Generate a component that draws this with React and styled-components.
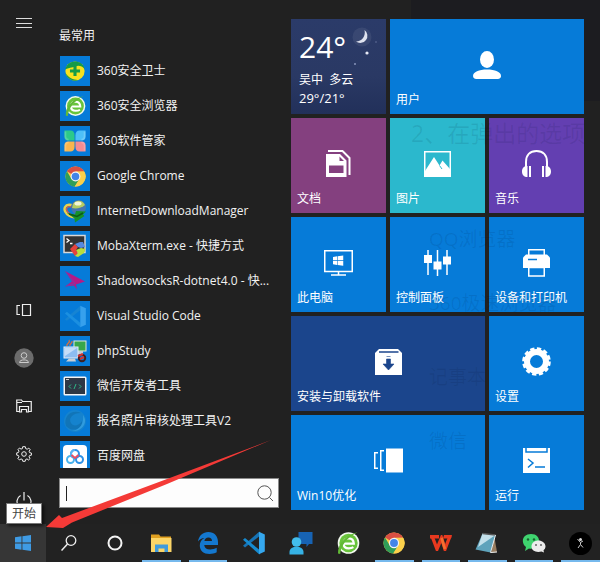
import React from 'react'
import styled, { createGlobalStyle } from 'styled-components'

const GlobalStyle = createGlobalStyle`
* {
    box-sizing: border-box;
}
body {
    margin: 0;
    background: #212121;
    font-family: 'Open Sans', 'Noto Sans CJK SC', sans-serif;
    font-size: 12px;
    color: #f2f2f2;
}
button, input {
    font: inherit;
    color: inherit;
    border: 0;
    padding: 0;
    background: none;
}
svg {
    display: block;
    flex: none;
}
`

const Desktop = styled.div`
    position: relative;
    display: flex;
    flex-direction: column;
    height: 100vh;
    overflow: hidden;
`
const StartMenu = styled.main`
    position: relative;
    flex: 1;
    min-height: 0;
    display: grid;
    grid-template-columns: 47px 244px 1fr;
`
const Rail = styled.nav`
    display: flex;
    flex-direction: column;
    gap: 8px;
    padding: 3px 0 2px;
`
const RailButton = styled.button`
    height: 40px;
    display: flex;
    align-items: center;
    justify-content: center;

    &:first-child {
        margin-bottom: auto;
    }
`
const AppColumn = styled.section`
    display: flex;
    flex-direction: column;
    min-height: 0;
    padding: 27px 12px 16px;
`
const Heading = styled.h2`
    margin: 0 0 11px;
    font-size: 12px;
    font-weight: 400;
    line-height: 18px;
`
const AppList = styled.ul`
    flex: 1;
    min-height: 0;
    overflow: hidden;
    margin: 0;
    padding: 0 0 0 1px;
    list-style: none;
`
const AppButton = styled.button`
    display: flex;
    align-items: center;
    gap: 7px;
    width: 100%;
    margin-bottom: 5px;
    line-height: 30px;
    white-space: nowrap;
`
const AppIcon = styled.span`
    flex: none;
    width: 30px;
    height: 30px;
    display: flex;
    align-items: center;
    justify-content: center;
    background: #067bd8;
`
const SearchBox = styled.form`
    display: flex;
    align-items: center;
    height: 30px;
    margin-top: 10px;
    padding: 0 4px 0 6px;
    border: 1px solid #8a8a8a;
    background: #fdfdfd;
    color: #222;
`
const Caret = styled.span`
    width: 1px;
    height: 15px;
    background: #222;
`
const SearchInput = styled.input`
    flex: 1;
    min-width: 0;
    outline: 0;
`
const Tiles = styled.section`
    display: grid;
    grid-template-columns: repeat(3, 95px);
    grid-auto-rows: 95px;
    gap: 4px;
    align-content: start;
    padding-top: 19px;
`
const TileButton = styled.button`
    grid-column: span ${props => props.$span || 1};
    display: grid;
    padding: 0 6px 4px;
    background: ${props => props.$color || '#067bd8'};
    color: #fff;
    text-align: left;

    > svg {
        grid-area: 1 / 1;
        place-self: center;
    }
`
const TileLabel = styled.span`
    grid-area: 1 / 1;
    align-self: end;
    line-height: 20px;
`
const Weather = styled(TileButton)`
    background: linear-gradient(#2b3b69, #2a3964 60%, #22305a);
    padding: 8px;
    align-content: start;

    > svg {
        place-self: start end;
    }
`
const Degrees = styled.span`
    grid-area: 1 / 1;
    font-size: 30px;
    line-height: 40px;
`
const Place = styled.span`
    padding-top: 4px;
    line-height: 18px;
`
const Range = styled.span`
    font-size: 13px;
    line-height: 18px;
`

/* the page behind the menu shows through the acrylic */
const BackdropPanel = styled.div`
    position: absolute;
    inset: 0 0 auto 411px;
    height: 101px;
    background: #1c1c20;
`
const Backdrop = styled.div`
    position: absolute;
    inset: 0 0 38px 411px;
    padding-top: 118px;
    pointer-events: none;
    overflow: hidden;
    color: rgba(0, 10, 40, 0.09);
    font-size: 19px;
    white-space: nowrap;
`
const BackdropTitle = styled.p`
    margin: 0;
    font-size: 23px;
    line-height: 30px;
`
const BackdropLine = styled.p`
    margin: ${props => props.$gap}px 0 0 18px;
    line-height: 30px;
`
const Taskbar = styled.footer`
    position: relative;
    display: flex;
    height: 38px;
    background: #222;
`
const SystemButtons = styled.div`
    display: grid;
    grid-template-columns: repeat(3, 46px);
    width: 141px;
`
const Running = styled.div`
    display: grid;
    grid-template-columns: repeat(10, 1fr);
    flex: none;
    width: 466px;
`
const TaskButton = styled.button`
    position: relative;
    display: flex;
    align-items: center;
    justify-content: center;
    background: ${props => props.$active ? '#363636' : 'none'};

    &::after {
        content: '';
        position: absolute;
        inset: auto 4px 0;
        height: 2px;
        background: ${props => props.$open ? '#76b9ed' : 'none'};
    }
`
const Tooltip = styled.span`
    position: absolute;
    left: 6px;
    bottom: 100%;
    padding: 0 5px;
    border: 1px solid #767676;
    background: #fff;
    color: #444;
    line-height: 19px;
    white-space: nowrap;
    box-shadow: 2px 2px 3px rgba(0, 0, 0, 0.6);
`
const Pointer = styled.svg`
    position: absolute;
    left: 44px;
    bottom: 32px;
    pointer-events: none;
`

const Icon = ({ w = 24, h = w, box, children }) => (
    <svg width={w} height={h} viewBox={box || `0 0 ${w} ${h}`} fill="none" aria-hidden="true">{children}</svg>
)

/* colour icons, drawn on a 24 unit box */
const Chrome = ({ size }) => (
    <Icon w={size} box="0 0 24 24">
        <circle cx="12" cy="12" r="11.5" fill="#fbd04b" />
        <path d="M12 12 2.2 6A11.5 11.5 0 0 1 22 6.2L12 6.5Z" fill="#d94f43" />
        <path d="M2.2 6A11.5 11.5 0 0 0 11.2 23.5L16.6 14.6 12 12 7.4 14.8Z" fill="#2f9e58" />
        <path d="M22 6.2H12L16.8 14.8 11.2 23.5A11.5 11.5 0 0 0 22 6.2Z" fill="#fbd04b" />
        <circle cx="12" cy="12" r="5.6" fill="#f4f4f4" />
        <circle cx="12" cy="12" r="4.3" fill="#4285e8" />
    </Icon>
)
const SafeBrowser = ({ size }) => (
    <Icon w={size} box="0 0 24 24">
        <circle cx="12.5" cy="12" r="10.8" fill="#f3faef" />
        <circle cx="12.5" cy="12" r="9.2" fill="#69c43c" />
        <path d="M7.4 12.6H17.8C17.6 9.2 15.8 7.3 12.7 7.3 9.6 7.3 7.5 9.4 7.5 12.4 7.5 15.6 9.5 17.3 12.8 17.3 14.6 17.3 16.2 16.9 17.4 16.1" stroke="#fff" strokeWidth="2.2" />
        <path d="M2 22.500C1.500 14 8 4.500 21.500 1.200 12 6 5 13.500 4.200 23Z" fill="#62b936" />
    </Icon>
)
const Code = ({ size, dim }) => (
    <Icon w={size} box="0 0 24 24">
        <path d="M17 5.5 3 16.5 1 14.8 17.4.5Z" fill={dim ? '#1684d3' : '#1673b5'} />
        <path d="M17 18.5 3 7 1 8.8 17.4 23.5Z" fill={dim ? '#1b8fe0' : '#168bd0'} />
        <path d="M17 .8 22.8 3.4V20.6L17 23.2Z" fill={dim ? '#36a0ed' : '#35a8ef'} />
    </Icon>
)
const Guard = () => (
    <Icon w={22} box="0 0 24 24">
        <circle cx="12" cy="12" r="10.5" fill="#f7e11f" />
        <path d="M1.5 10C3 3.5 9 .5 14.5 1.8 19 2.8 22 5.8 22.6 10 19.4 6.2 15.8 5.8 12.4 7 8.6 8.4 4.6 8.4 1.5 10Z" fill="#159b48" />
        <path d="M1.4 14C3 20 9 24 15.4 22 10 21.6 5 19.6 1.4 14Z" fill="#159b48" />
        <path d="M12 6.5V17.5M6.5 12H17.5" stroke="#159b48" strokeWidth="3.4" />
    </Icon>
)
const Manager = () => (
    <Icon w={22} box="0 0 24 24">
        <path d="M.5.5H7Q11.5.5 11.5 6V11.5H5Q.5 11.5.5 7Z" fill="#2cc989" />
        <path d="M23.5.5H17Q12.5.5 12.5 6V11.5H19Q23.5 11.5 23.5 7Z" fill="#4dc0f7" />
        <path d="M.5 23.5H7Q11.5 23.5 11.5 18V12.5H5Q.5 12.5.5 17Z" fill="#f8b54d" />
        <path d="M23.5 23.5H17Q12.5 23.5 12.5 18V12.5H19Q23.5 12.5 23.5 17Z" fill="#f58b91" />
        <path d="M1.500 1.500V7Q1.500 10.500 5 10.500M22.500 1.500V7Q22.500 10.500 19 10.500M1.500 22.500V17Q1.500 13.500 5 13.500M22.500 22.500V17Q22.500 13.500 19 13.500" stroke="#fff" strokeOpacity=".2" strokeWidth="2" />
    </Icon>
)
const Downloader = () => (
    <Icon w={24}>
        <ellipse cx="9" cy="12" rx="8" ry="5.500" transform="rotate(30 9 12)" stroke="#e9d14c" strokeWidth="2.400" />
        <ellipse cx="9" cy="12" rx="6" ry="3.500" transform="rotate(30 9 12)" stroke="#d9584a" strokeWidth="1.400" />
        <circle cx="15.500" cy="8.500" r="7.500" fill="#4775ad" />
        <path d="M10 5C13 0 20 1 22 6 19 9 13 10 9 9Z" fill="#b5cc62" />
        <ellipse cx="15" cy="4.500" rx="3.500" ry="2" fill="#f3f6d8" />
        <path d="M4 14 12 15.500 13 12 23 12.500 20 15.500 21.500 17 12 23.500 11.500 19.500Z" fill="#15922a" />
        <path d="M6 15 14 17.500 20 14" stroke="#0b5b18" strokeWidth="1.500" />
    </Icon>
)
const Terminal = () => (
    <Icon w={24}>
        <rect x="1" y="1.500" width="21" height="17" fill="#333" stroke="#d8d8d8" strokeWidth="1.500" />
        <path d="M3.500 4.500 6 6.500 3.500 8.500M7 9.500H9.500" stroke="#fff" strokeWidth="1.300" />
        <path d="M7 15 12 10 15 13 13 16 15 19 12 22Z" fill="#e5423c" />
        <path d="M12 10 17 8 20 8 22 13 18 14 15 13Z" fill="#5689e0" />
        <path d="M13 16 18 14 22.500 15 21 19 15 23 12 22 15 19Z" fill="#b9de3d" />
    </Icon>
)
const Plane = () => (
    <Icon w={22}>
        <path d="M1 1 21 11.500 12 14.500 13 19.500 10 15.500 1 16.500 8 11.500Z" fill="#b61a86" />
        <path d="M1.500 1.500 11 13.500 2 16" stroke="#6a47b0" strokeWidth=".8" />
    </Icon>
)
const Computers = () => (
    <Icon w={24}>
        <rect x="11" y="2" width="12" height="10" fill="#38a74b" stroke="#dce6dc" />
        <path d="M14 12H20V15H14Z" fill="#c5ccd3" />
        <path d="M4 7C3 4 8 4 6 1M7 7C6 5 10 4 9 2" stroke="#d06f42" strokeWidth="1.400" />
        <rect x="1" y="8" width="14" height="11" fill="#8dbdf0" stroke="#e4edf7" />
        <path d="M2 9H14L2 17Z" fill="#c4ddf8" />
        <path d="M3 22.500 6 19.500H12L13 22.500Z" fill="#c8cdd2" />
        <circle cx="19" cy="19" r="3.200" stroke="#402020" strokeWidth="2" />
        <path d="M15 17 20 15M17 20 21 18" stroke="#d5322e" strokeWidth="2" />
    </Icon>
)
const DevTools = () => (
    <Icon w={24} h={20}>
        <rect x=".5" y=".5" width="23" height="19" rx="1.500" fill="#f3f3f3" />
        <rect x="2" y="2" width="20" height="16" fill="#2e3744" />
        <path d="M3 3.500H6" stroke="#ccc" />
        <path d="M8 8.500 6 10.500 8 12.500M16 8.500 18 10.500 16 12.500M13 8 11 13" stroke="#2fb786" />
    </Icon>
)
const Swirl = () => (
    <Icon w={24}>
        <circle cx="12" cy="12" r="11" fill="#1583ce" />
        <path d="M3 17C0 7 9 0 18 4 10 4 5 9 8 14 10 18 16 17 19 12 20 20 9 24 3 17Z" fill="#1175b8" />
        <path d="M20 6C26 14 18 23 9 22 16 21 21 16 20 6Z" fill="#309bdd" />
    </Icon>
)
const Netdisk = () => (
    <Icon w={24}>
        <rect width="24" height="26" rx="4" y="1" fill="#fff" />
        <circle cx="12" cy="10" r="4" stroke="#2d91e7" strokeWidth="2" />
        <path d="M8.500 12A4 4 0 0 1 12 6" stroke="#59b4f2" strokeWidth="2" />
        <circle cx="7.500" cy="15.500" r="3.500" stroke="#48b3ee" strokeWidth="2" />
        <circle cx="16.500" cy="15.500" r="3.500" stroke="#2d91e7" strokeWidth="2" />
        <path d="M8.500 11 12 14 15.500 11" stroke="#ea4f64" strokeWidth="2" />
    </Icon>
)

const WinPanes = () => (
    <path d="M0 2.200 6.500 1.300V7.600H0ZM7.400 1.200 16 0V7.600H7.400ZM0 8.400H6.500V14.700L0 13.800ZM7.400 8.400H16V16L7.400 14.800Z" fill="currentColor" />
)

/* white tile glyphs */
const UserGlyph = () => (
    <Icon w={28}>
        <ellipse cx="14" cy="8.500" rx="7" ry="8.500" fill="#fff" />
        <path d="M0 25C0 21 6 18.500 14 18.500S28 21 28 25C28 27.500 26 28 23 28H5C2 28 0 27.500 0 25Z" fill="#fff" />
    </Icon>
)
const DocsGlyph = () => (
    <Icon w={25} h={27}>
        <path d="M2 1H16.500L23.500 8V25" stroke="#fff" strokeWidth="2" />
        <path fillRule="evenodd" d="M0 4H14L20.500 10.500V27H0ZM3 15.500V23H17.500V15.500ZM13.500 6.500V11H18Z" fill="#fff" />
    </Icon>
)
const PicturesGlyph = () => (
    <Icon w={27} h={26}>
        <rect x=".75" y=".75" width="25.500" height="24.500" stroke="#fff" strokeWidth="1.500" />
        <path d="M1 20 10 6 15.500 14.500 18.500 9.500 26 18V25H1Z" fill="#fff" />
        <path d="M15.500 14.500 18 18" stroke="#2bb8cd" />
    </Icon>
)
const MusicGlyph = () => (
    <Icon w={29} h={27}>
        <path d="M4 17V12C4 5 8 1 14.500 1S25 5 25 12V17" stroke="#fff" strokeWidth="2" />
        <path d="M5.500 16V27C2 27 0 25 0 21.500S2 16 5.500 16ZM7 16H9V27H7ZM20 16H22V27H20ZM23.500 16C27 16 29 18 29 21.500S27 27 23.500 27Z" fill="#fff" />
    </Icon>
)
const PcGlyph = () => (
    <Icon w={29} h={26}>
        <path d="M.75.75H28.250V21.500H.75ZM14.500 21.500V24.500M7 25H22" stroke="#fff" strokeWidth="1.500" />
        <g transform="translate(9 5.500) scale(.64)"><WinPanes /></g>
    </Icon>
)
const SlidersGlyph = () => (
    <Icon w={27} h={26}>
        <path d="M4 0V25M13.500 0V26M23 0V25" stroke="#fff" strokeWidth="1.500" />
        <path d="M0 5H8V13H0ZM9.500 11.500H17.500V19.500H9.500ZM19 6.500H27V14.500H19Z" fill="#fff" />
    </Icon>
)
const PrinterGlyph = () => (
    <Icon w={27} h={28}>
        <path d="M5.750 6V.75H21.250V6" stroke="#fff" strokeWidth="1.500" />
        <path d="M3 5.500H24L27 8.500V19H0V8.500Z" fill="#fff" />
        <path d="M5 10.500H14" stroke="#067bd8" strokeWidth="1.500" />
        <path d="M5.750 18.500H21.250V27H5.750Z" fill="#067bd8" stroke="#fff" strokeWidth="1.500" />
    </Icon>
)
const PackageGlyph = () => (
    <Icon w={27} h={26}>
        <path d="M4 0H23L27 4V26H0V4Z" fill="#fff" />
        <path d="M4 3H23.500" stroke="#1b458c" strokeWidth="1.500" />
        <path d="M11.500 7.500H15.500M11.500 10H15.500V15H19L13.500 21 8 15H11.500Z" stroke="#1b458c" fill="#1b458c" strokeWidth=".6" />
    </Icon>
)
const GearGlyph = () => (
    <Icon w={29}>
        <circle cx="14.500" cy="14.500" r="9.500" stroke="#fff" strokeWidth="6" />
        <circle cx="14.500" cy="14.500" r="13" stroke="#fff" strokeWidth="2.600" strokeDasharray="4.300 2.507" />
    </Icon>
)
const CardsGlyph = () => (
    <Icon w={29} h={25}>
        <path d="M4 4.750H.75V20.250H4M10 2.750H6.750V22.250H10" stroke="#fff" strokeWidth="1.500" />
        <path d="M12 .5H29V24.500H12Z" fill="#fff" />
    </Icon>
)
const RunGlyph = () => (
    <Icon w={27} h={25}>
        <path d="M0 0H27V25H0Z" fill="#fff" />
        <path d="M3 0V4H24V0" stroke="#067bd8" strokeWidth="1.500" />
        <path d="M5 11 10 15 5 19.500M12 19H22" stroke="#067bd8" strokeWidth="1.500" />
    </Icon>
)
const Moon = () => (
    <Icon w={26} h={40}>
        <circle cx="10" cy="10" r="9.500" fill="#fff" fillOpacity=".07" />
        <path d="M12.500 3A7 7 0 1 1 4 14.500C10 14.500 14 9 12.500 3Z" fill="#dfe3ef" />
        <circle cx="15" cy="26" r="1.600" fill="#e6e9f5" />
        <circle cx="3" cy="37" r="1" fill="#8794bb" />
        <circle cx="24" cy="15" r=".8" fill="#65739e" />
    </Icon>
)

/* rail glyphs */
const Cards = () => (
    <Icon w={16} h={14}>
        <path d="M4 2.500H1V11.500H4M6.500 1.500H14.500V12.500H6.500Z" stroke="#eee" strokeWidth="1.200" />
    </Icon>
)
const Avatar = () => (
    <Icon w={20}>
        <circle cx="10" cy="10" r="9.700" fill="#6c6c6c" />
        <circle cx="10" cy="7.500" r="2.800" stroke="#ccc" />
        <path d="M5.500 14.500C5.500 11 14.500 11 14.500 14.500Z" stroke="#ccc" />
    </Icon>
)
const Explorer = () => (
    <Icon w={16} h={14}>
        <path d="M3 12.500H.75V1H5.500L6.500 2.500H15.250V12.500H13M.75 3.500H6M3.500 13V7.500H12.500V13H10.500V10.500H5.500V13Z" stroke="#eee" strokeWidth="1.200" />
    </Icon>
)
const Gear = () => (
    <Icon w={16}>
        <path d="M6.700.7H9.300L9.700 2.600 11.200 3.200 12.800 2.100 14.200 3.700 13.100 5.200 13.600 6.600 15.400 7V9.200L13.600 9.500 13 10.900 14.100 12.500 12.500 14 11 12.900 9.600 13.500 9.200 15.300H6.800L6.400 13.500 5 12.900 3.500 14 1.900 12.400 3 10.900 2.400 9.500.7 9.100V6.900L2.400 6.500 3 5.100 2 3.600 3.500 2 5 3.100 6.400 2.600Z" stroke="#eee" />
        <circle cx="8" cy="8" r="2.300" stroke="#eee" />
    </Icon>
)
const Power = () => (
    <Icon w={16} h={20}>
        <path d="M8 0V8.500M4.600 3.600A7 7 0 1 0 11.400 3.600" stroke="#eee" strokeWidth="1.200" />
    </Icon>
)

/* taskbar icons */
const Folder = () => (
    <Icon w={21} h={19}>
        <path d="M0 .5H8L9.500 2.500H20V8H0Z" fill="#e0a020" />
        <path d="M0 4H20.500V18H0Z" fill="#fbd568" />
        <path d="M4 18V10.500H17V18H13.500V14.500H7.500V18Z" fill="#3f9bdd" />
    </Icon>
)
const Edge = () => (
    <Icon w={20} h={22}>
        <path d="M0 9.500C1 3.500 5 0 10.300 0 16.200 0 20 4 20 10V13H6.200C6.500 16 8.800 17.500 12.200 17.500 14.500 17.500 16.700 17 18.700 15.800V20.300C16.700 21.500 14.200 22 11.500 22 5.500 22 1.800 18.500 1.800 13.500 1.800 10.200 3.500 7.500 6.500 6 3.800 6.200 1.600 7.400 0 9.500ZM6.400 9H14C14 6.800 12.700 5.400 10.400 5.400 8.200 5.400 6.800 6.700 6.400 9Z" fill="#1478cf" />
    </Icon>
)
const Chat = () => (
    <Icon w={24}>
        <path d="M9.500 1H23.500V13H20L17.500 16V13H9.500Z" fill="#1763b3" />
        <circle cx="7.500" cy="11" r="4.800" fill="#42bdec" />
        <path d="M.5 23.500V21C.5 14 14.500 14 14.500 21V23.500Z" fill="#36b2e5" />
    </Icon>
)
const Wps = () => (
    <Icon w={22} h={16}>
        <path d="M0 0H9V3.500H0ZM14 0H22L21 3.500H13Z" fill="#e8391f" />
        <path d="M2 1 7 14 11.500 3 15 14 20 1" stroke="#e8391f" strokeWidth="3.400" />
        <path d="M11.500 3 15 14" stroke="#f3702f" strokeWidth="2.600" />
    </Icon>
)
const Notepad = () => (
    <Icon w={24} h={22}>
        <path d="M19 3 22 20 16 21Z" fill="#987d60" />
        <path d="M7.500 1.500 20.500 3 15.500 20.500.5 17.500Z" fill="#5fa3bb" />
        <path d="M7.500 1.500 20.500 3 3 15Z" fill="#c3e0ea" />
        <path d="M7.500 1.500 20.500 3" stroke="#555" strokeWidth="1.500" />
        <path d="M20.500 3 15.500 20.500 22 20" stroke="#e9edf0" />
    </Icon>
)
const WeChat = () => (
    <Icon w={24} h={20}>
        <path d="M3 18 4 14C-2 9 1 1 9 1S18.500 8 16 12C13 16 9 16 7 15.500Z" fill="#3fd36f" />
        <circle cx="6" cy="6.500" r="1.200" fill="#17612f" /><circle cx="12" cy="6.500" r="1.200" fill="#17612f" />
        <path d="M22 19.500 19.500 18.500C14 20 9.500 17.500 9.500 13.500S13 7.500 16.500 7.500 23.500 10 23.500 13.500C23.500 15 22.500 16.500 21.500 17.300Z" fill="#ececec" />
        <circle cx="14" cy="12" r="1" fill="#666" /><circle cx="19" cy="12" r="1" fill="#666" />
    </Icon>
)
const Runner = () => (
    <Icon w={23}>
        <circle cx="11.500" cy="11.500" r="11.500" fill="#000" />
        <circle cx="11.500" cy="7.500" r="1.500" fill="#ddd" />
        <path d="M8.500 7 11.500 10.500 14 9M11.500 10.500V12.500L9 16M11.500 12.500 14 15.500" stroke="#ccc" />
    </Icon>
)

const rail = [
    ['展开', <Icon w={16} h={11}><path d="M0 .5H16M0 5.500H16M0 9.500H16" stroke="#ddd" /></Icon>],
    ['任务视图', <Cards />],
    ['账户', <Avatar />],
    ['文件资源管理器', <Explorer />],
    ['设置', <Gear />],
    ['电源', <Power />]
]

const apps = [
    ['360安全卫士', <Guard />],
    ['360安全浏览器', <SafeBrowser size={22} />],
    ['360软件管家', <Manager />],
    ['Google Chrome', <Chrome size={21} />],
    ['InternetDownloadManager', <Downloader />],
    ['MobaXterm.exe - 快捷方式', <Terminal />],
    ['ShadowsocksR-dotnet4.0 - 快...', <Plane />],
    ['Visual Studio Code', <Code size={23} dim />],
    ['phpStudy', <Computers />],
    ['微信开发者工具', <DevTools />],
    ['报名照片审核处理工具V2', <Swirl />],
    ['百度网盘', <Netdisk />]
]

const tiles = [
    { label: '用户', icon: <UserGlyph />, span: 2 },
    { label: '文档', icon: <DocsGlyph />, color: '#84407f' },
    { label: '图片', icon: <PicturesGlyph />, color: '#2bb8cd' },
    { label: '音乐', icon: <MusicGlyph />, color: '#633fb1' },
    { label: '此电脑', icon: <PcGlyph /> },
    { label: '控制面板', icon: <SlidersGlyph /> },
    { label: '设备和打印机', icon: <PrinterGlyph /> },
    { label: '安装与卸载软件', icon: <PackageGlyph />, span: 2, color: '#1b458c' },
    { label: '设置', icon: <GearGlyph /> },
    { label: 'Win10优化', icon: <CardsGlyph />, span: 2 },
    { label: '运行', icon: <RunGlyph /> }
]

const running = [
    ['文件资源管理器', <Folder />, true],
    ['Edge', <Edge />, true],
    ['VS Code', <Code size={24} />, false],
    ['联系人', <Chat />, false],
    ['360安全浏览器', <SafeBrowser size={24} />, false],
    ['Chrome', <Chrome size={22} />, true],
    ['WPS', <Wps />, true],
    ['记事本', <Notepad />, true],
    ['微信', <WeChat />, true],
    ['运动', <Runner />, true]
]

export default class App extends React.Component {
    constructor(props) {
        super(props)
        this.state = { query: '' }
        this.handleChange = this.handleChange.bind(this)
    }

    handleChange(e) {
        this.setState({ query: e.target.value })
    }

    render() {
        return (
            <Desktop>
                <GlobalStyle />
                <BackdropPanel />
                <StartMenu>
                    <Rail>
                        {rail.map(([name, icon]) => (
                            <RailButton key={name} aria-label={name}>{icon}</RailButton>
                        ))}
                    </Rail>
                    <AppColumn>
                        <Heading>最常用</Heading>
                        <AppList>
                            {apps.map(([name, icon]) => (
                                <li key={name}>
                                    <AppButton>
                                        <AppIcon>{icon}</AppIcon>
                                        {name}
                                    </AppButton>
                                </li>
                            ))}
                        </AppList>
                        <SearchBox onSubmit={e => e.preventDefault()}>
                            <Caret />
                            <SearchInput aria-label="搜索" value={this.state.query} onChange={this.handleChange} />
                            <button aria-label="搜索">
                                <Icon w={17}>
                                    <circle cx="7.500" cy="7.500" r="6.700" stroke="#555" />
                                    <path d="M12.500 12.500 16 16" stroke="#555" />
                                </Icon>
                            </button>
                        </SearchBox>
                    </AppColumn>
                    <Tiles>
                        <Weather>
                            <Degrees>24°</Degrees>
                            <Moon />
                            <Place>吴中&nbsp; 多云</Place>
                            <Range>29°/21°</Range>
                        </Weather>
                        {tiles.map(tile => (
                            <TileButton key={tile.label} $span={tile.span} $color={tile.color}>
                                {tile.icon}
                                <TileLabel>{tile.label}</TileLabel>
                            </TileButton>
                        ))}
                    </Tiles>
                </StartMenu>
                <Backdrop aria-hidden="true">
                    <BackdropTitle>2、在弹出的选项</BackdropTitle>
                    <BackdropLine $gap={76}>QQ浏览器</BackdropLine>
                    <BackdropLine $gap={34}>360极速浏览器</BackdropLine>
                    <BackdropLine $gap={44}>记事本</BackdropLine>
                    <BackdropLine $gap={34}>微信</BackdropLine>
                </Backdrop>
                <Taskbar>
                    <SystemButtons>
                        <TaskButton $active>
                            <Tooltip>开始</Tooltip>
                            <Icon w={16}><g color="#3f9be4"><WinPanes /></g></Icon>
                        </TaskButton>
                        <TaskButton aria-label="搜索">
                            <Icon w={16}>
                                <circle cx="10" cy="5.500" r="4.800" stroke="#eee" strokeWidth="1.300" />
                                <path d="M6.500 9 .5 15.500" stroke="#eee" strokeWidth="1.500" />
                            </Icon>
                        </TaskButton>
                        <TaskButton aria-label="Cortana">
                            <Icon w={16}><circle cx="8" cy="8" r="6.500" stroke="#f4f4f4" strokeWidth="2" /></Icon>
                        </TaskButton>
                    </SystemButtons>
                    <Running>
                        {running.map(([name, icon, open]) => (
                            <TaskButton key={name} aria-label={name} $open={open}>{icon}</TaskButton>
                        ))}
                    </Running>
                </Taskbar>
                <Pointer width="230" height="92" viewBox="0 0 230 92" aria-hidden="true">
                    <path d="M2 89 15 77 18 80 123 41 227 2 123 46 28 84.500 19 90Z" fill="#f43a37" />
                </Pointer>
            </Desktop>
        )
    }
}
